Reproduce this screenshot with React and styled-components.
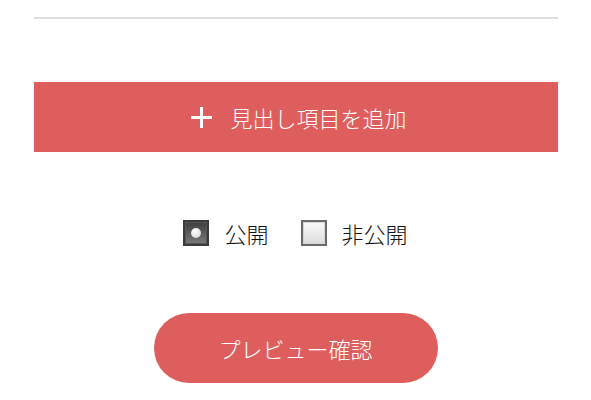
import React, { useState } from "react";
import styled, { createGlobalStyle } from "styled-components";

const Global = createGlobalStyle`
  html, body { margin: 0; padding: 0; background: #fff; }
  body { font-family: "Noto Sans CJK JP", "Noto Sans", sans-serif; color: #222; }
`;

const Page = styled.div`
  width: 524px;
  margin: 0 auto;
  padding-top: 17px;
  display: flex;
  flex-direction: column;
  align-items: center;
`;

const Divider = styled.div`
  width: 100%;
  height: 2px;
  background: #dedede;
`;

const AddButton = styled.button`
  margin-top: 63px;
  width: 100%;
  height: 70px;
  border: none;
  background: #de5e5e;
  color: #fff;
  font-family: inherit;
  font-size: 22px;
  font-weight: 300;
  display: flex;
  align-items: center;
  justify-content: center;
  gap: 18px;
  padding: 0 0 0 7px;
  cursor: pointer;
`;

const Plus = styled.span`
  position: relative;
  width: 21px;
  height: 21px;
  display: inline-block;
  &::before, &::after {
    content: "";
    position: absolute;
    background: #fff;
  }
  &::before { left: 0; right: 0; top: 9px; height: 3px; }
  &::after { top: 0; bottom: 0; left: 9px; width: 3px; }
`;

const Choices = styled.div`
  margin-top: 68px;
  display: flex;
  align-items: center;
  gap: 32px;
`;

const Choice = styled.label`
  display: flex;
  align-items: center;
  gap: 15px;
  font-size: 22px;
  font-weight: 300;
  line-height: 26px;
  color: #111;
  cursor: pointer;
`;

const Box = styled.span`
  box-sizing: border-box;
  width: 26px;
  height: 26px;
  display: flex;
  align-items: center;
  justify-content: center;
  border: 2px solid ${(p) => (p.$on ? "#3a3a3a" : "#6a6a6a")};
  box-shadow: inset 0 0 0 1px ${(p) => (p.$on ? "#555" : "#d8d8d8")};
  background: ${(p) =>
    p.$on
      ? "linear-gradient(#3c3c3c, #7c7c7c)"
      : "linear-gradient(#fafafa, #dcdcdc)"};
`;

const Dot = styled.span`
  width: 10px;
  height: 10px;
  border-radius: 50%;
  background: radial-gradient(circle at 40% 35%, #ffffff, #d0d0d0);
`;

const PreviewButton = styled.button`
  margin-top: 67px;
  width: 284px;
  height: 70px;
  border: none;
  border-radius: 35px;
  background: #de5e5e;
  color: #fff;
  font-family: inherit;
  font-size: 22px;
  font-weight: 300;
  padding: 0;
  cursor: pointer;
`;

export default function App() {
  const [pub, setPub] = useState(true);
  return (
    <>
      <Global />
      <Page>
        <Divider />
        <AddButton>
          <Plus />
          見出し項目を追加
        </AddButton>
        <Choices>
          <Choice onClick={() => setPub(true)}>
            <Box $on={pub}>{pub && <Dot />}</Box>
            公開
          </Choice>
          <Choice onClick={() => setPub(false)}>
            <Box $on={!pub}>{!pub && <Dot />}</Box>
            非公開
          </Choice>
        </Choices>
        <PreviewButton>プレビュー確認</PreviewButton>
      </Page>
    </>
  );
}
